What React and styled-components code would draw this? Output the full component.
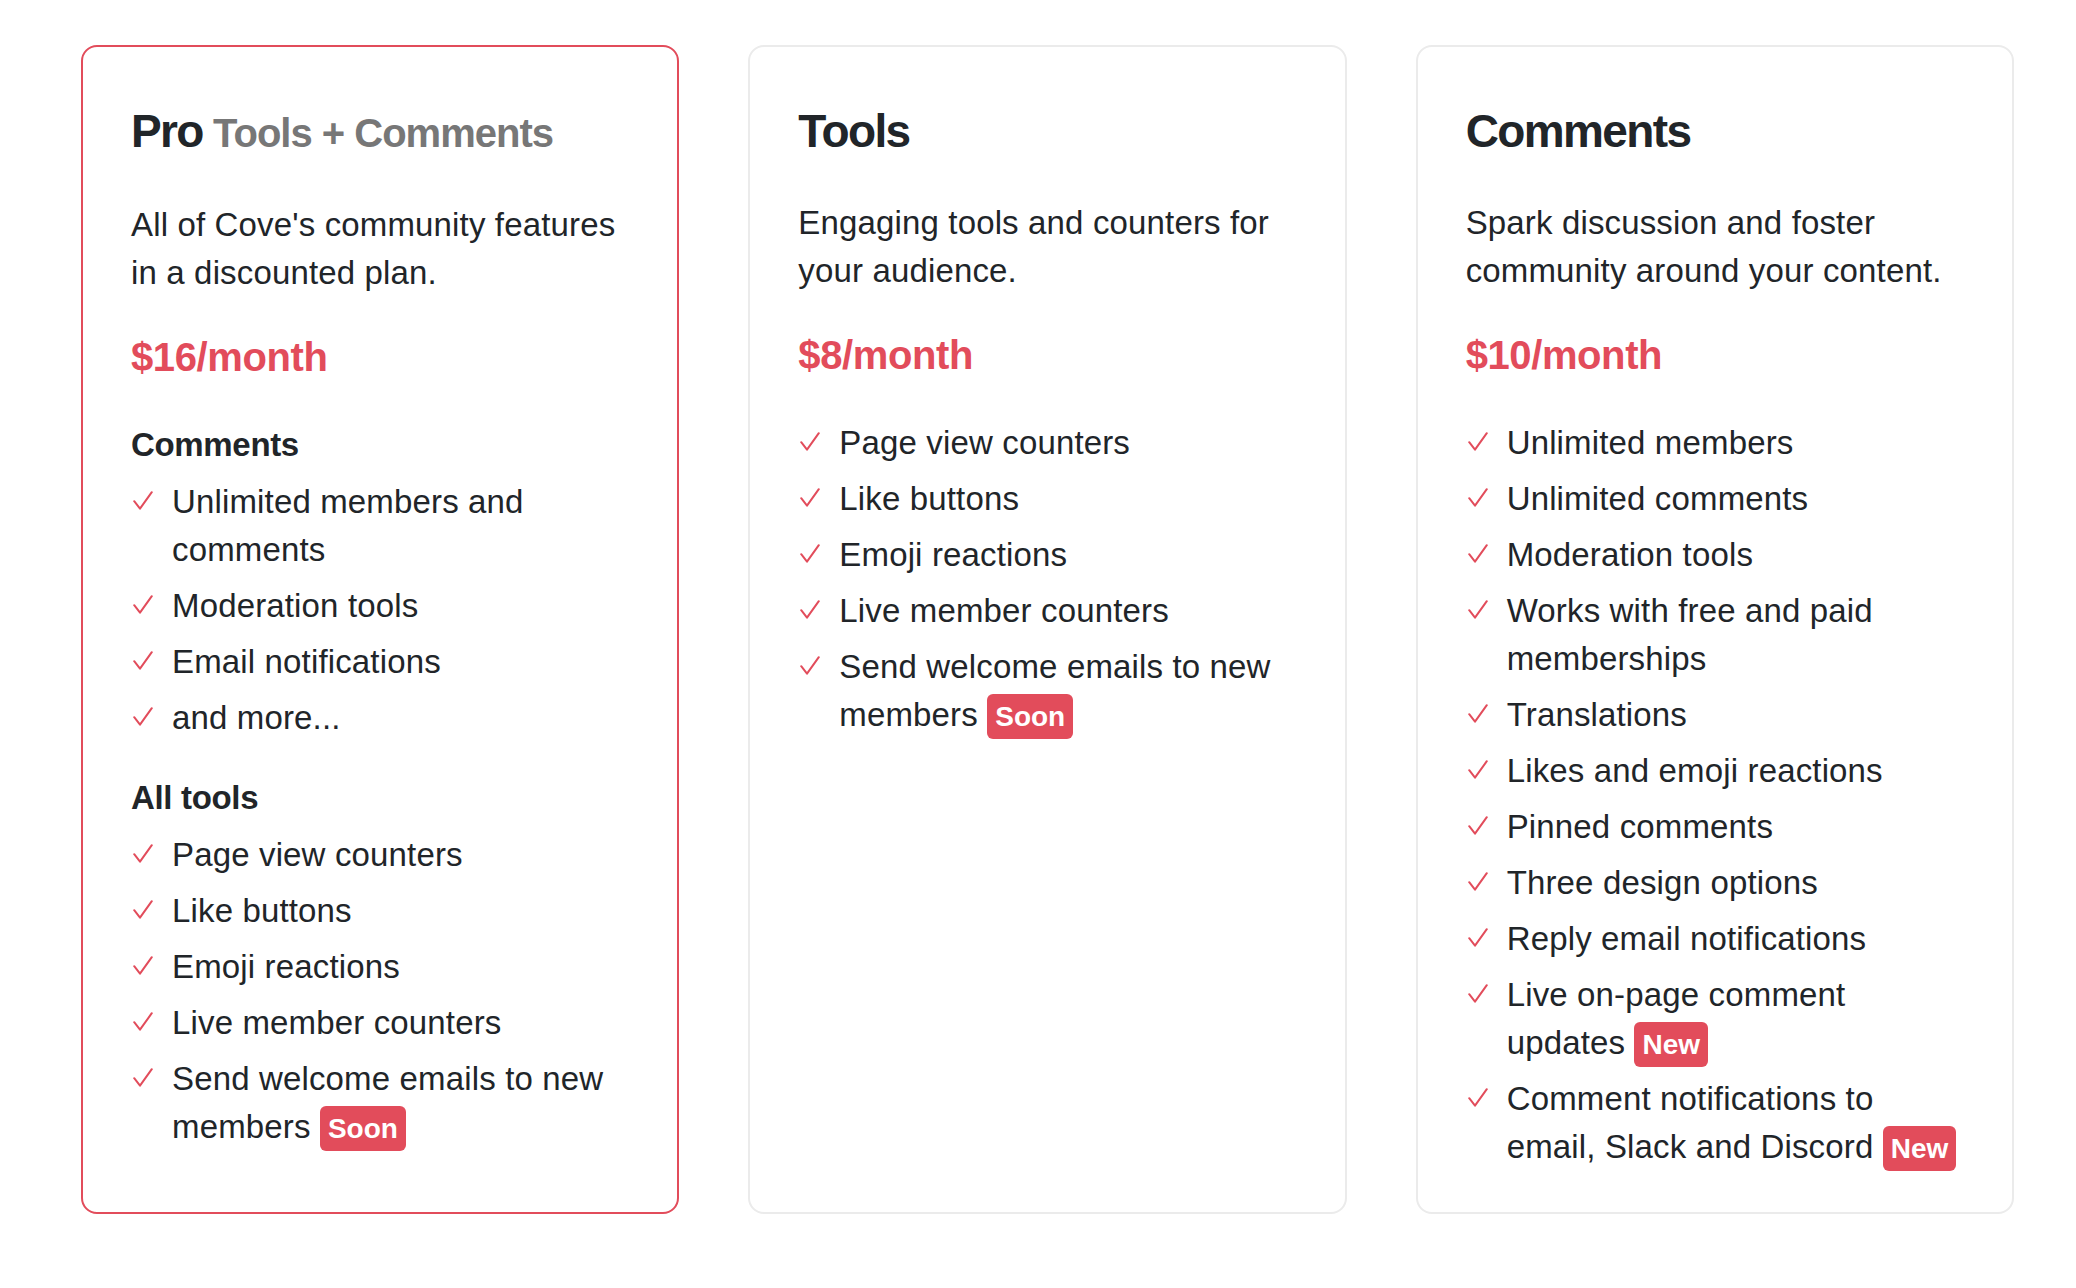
import React from 'react';
import styled, { createGlobalStyle } from 'styled-components';

const RED = '#e24c5b';
const INK = '#212529';

const GlobalStyle = createGlobalStyle`
  html, body {
    margin: 0;
    padding: 0;
    background: #ffffff;
  }
  body {
    font-family: "Liberation Sans", Arial, Helvetica, sans-serif;
    color: ${INK};
    -webkit-font-smoothing: antialiased;
  }
`;

const Page = styled.div`
  padding: 45px 62px 40px 81px;
`;

const PlanGrid = styled.div`
  display: grid;
  grid-template-columns: repeat(3, 1fr);
  column-gap: 69px;
`;

const Card = styled.div`
  border: 2px solid ${({ featured }) => (featured ? RED : '#ebebeb')};
  border-radius: 16px;
  padding: 56px 48px 41px 48px;
  background: #fff;
`;

const Title = styled.h2`
  margin: 0 0 40px;
  font-size: 46px;
  line-height: 56px;
  font-weight: 700;
  letter-spacing: -0.035em;
  color: ${INK};
`;

const TitleSub = styled.span`
  font-size: 40px;
  letter-spacing: -0.025em;
  color: #777777;
`;

const Description = styled.p`
  margin: 0 0 36px;
  font-size: 33px;
  line-height: 48px;
  letter-spacing: 0.15px;
`;

const Price = styled.div`
  margin: 0 0 40px;
  font-size: 40px;
  line-height: 48px;
  font-weight: 700;
  letter-spacing: -0.01em;
  color: ${RED};
`;

const Section = styled.div`
  & + & {
    margin-top: 32px;
  }
`;

const SectionTitle = styled.h3`
  margin: 0 0 9px;
  font-size: 33px;
  line-height: 48px;
  font-weight: 700;
  letter-spacing: -0.01em;
`;

const FeatureList = styled.ul`
  list-style: none;
  margin: 0;
  padding: 0;
`;

const Feature = styled.li`
  display: flex;
  font-size: 33px;
  line-height: 48px;
  letter-spacing: 0.15px;

  & + & {
    margin-top: 8px;
  }
`;

const CheckBox = styled.span`
  flex: 0 0 39px;
  display: flex;
  align-items: flex-start;
  padding-top: 13px;
  padding-left: 2px;
`;

const FeatureText = styled.span`
  flex: 1;
`;

const Badge = styled.span`
  display: inline-block;
  padding: 8px 8px;
  font-size: 28px;
  line-height: 29px;
  font-weight: 700;
  letter-spacing: 0;
  color: #fff;
  background: ${RED};
  border-radius: 6px;
`;

const Check = () => (
  <svg width="20" height="19" viewBox="0 0 20 19" fill="none">
    <path
      d="M1.2 10.2 L7 17.6 L18.8 1.2"
      stroke={RED}
      strokeWidth="2"
      strokeLinecap="round"
      strokeLinejoin="round"
    />
  </svg>
);

const toolItems = [
  { text: 'Page view counters' },
  { text: 'Like buttons' },
  { text: 'Emoji reactions' },
  { text: 'Live member counters' },
  { text: 'Send welcome emails to new members', badge: 'Soon' }
];

const plans = [
  {
    id: 'pro',
    featured: true,
    title: 'Pro',
    sub: 'Tools + Comments',
    description: "All of Cove's community features in a discounted plan.",
    price: '$16/month',
    sections: [
      {
        heading: 'Comments',
        items: [
          { text: 'Unlimited members and comments' },
          { text: 'Moderation tools' },
          { text: 'Email notifications' },
          { text: 'and more...' }
        ]
      },
      { heading: 'All tools', items: toolItems }
    ]
  },
  {
    id: 'tools',
    title: 'Tools',
    description: 'Engaging tools and counters for your audience.',
    price: '$8/month',
    sections: [{ items: toolItems }]
  },
  {
    id: 'comments',
    title: 'Comments',
    description: 'Spark discussion and foster community around your content.',
    price: '$10/month',
    sections: [
      {
        items: [
          { text: 'Unlimited members' },
          { text: 'Unlimited comments' },
          { text: 'Moderation tools' },
          { text: 'Works with free and paid memberships' },
          { text: 'Translations' },
          { text: 'Likes and emoji reactions' },
          { text: 'Pinned comments' },
          { text: 'Three design options' },
          { text: 'Reply email notifications' },
          { text: 'Live on-page comment updates', badge: 'New' },
          { text: 'Comment notifications to email, Slack and Discord', badge: 'New' }
        ]
      }
    ]
  }
];

function PlanCard({ plan }) {
  return (
    <Card featured={plan.featured}>
      <Title>
        {plan.title}
        {plan.sub && <TitleSub> {plan.sub}</TitleSub>}
      </Title>
      <Description>{plan.description}</Description>
      <Price>{plan.price}</Price>
      {plan.sections.map((section, i) => (
        <Section key={i}>
          {section.heading && <SectionTitle>{section.heading}</SectionTitle>}
          <FeatureList>
            {section.items.map(item => (
              <Feature key={item.text}>
                <CheckBox>
                  <Check />
                </CheckBox>
                <FeatureText>
                  {item.text}
                  {item.badge && (
                    <>
                      {' '}
                      <Badge>{item.badge}</Badge>
                    </>
                  )}
                </FeatureText>
              </Feature>
            ))}
          </FeatureList>
        </Section>
      ))}
    </Card>
  );
}

export default function App() {
  return (
    <Page>
      <GlobalStyle />
      <PlanGrid>
        {plans.map(plan => (
          <PlanCard key={plan.id} plan={plan} />
        ))}
      </PlanGrid>
    </Page>
  );
}
